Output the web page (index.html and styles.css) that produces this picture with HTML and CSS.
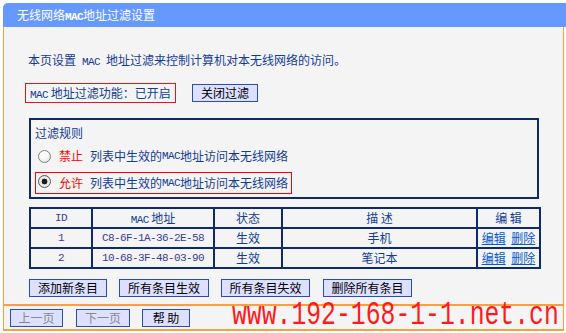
FILE: index.html
```html
<!DOCTYPE html>
<html>
	<head>
		<meta charset="UTF-8">
		<title>无线网络MAC地址过滤设置</title>
		<link rel="stylesheet" href="styles.css">
	</head>
	<body>
		<div id="box">
			<div class="title">无线网络<span class="en b">MAC</span>地址过滤设置</div>
			<div class="main">
				<div class="content">
					<p class="intro">本页设置<span class="en sp">MAC</span>地址过滤来控制计算机对本无线网络的访问。</p>
					<div class="state">
						<span class="stateBox"><span class="en">MAC</span> 地址过滤功能：已开启</span>
						<button class="btn" style="width:66px">关闭过滤</button>
					</div>
					<div class="rule">
						<div class="ruleTitle">过滤规则</div>
						<label class="ruleRow"><input type="radio" name="rule"><span class="red">禁止</span>列表中生效的<span class="en">MAC</span>地址访问本无线网络</label>
						<label class="ruleRow on"><input type="radio" name="rule" checked><span class="red">允许</span>列表中生效的<span class="en">MAC</span>地址访问本无线网络</label>
					</div>
					<table class="list">
						<colgroup>
							<col style="width:62px"><col style="width:122px"><col style="width:68px"><col style="width:195px"><col style="width:63px">
						</colgroup>
						<tr>
							<td class="en">ID</td>
							<td><span class="en">MAC</span> 地址</td>
							<td>状态</td>
							<td>描 述</td>
							<td>编 辑</td>
						</tr>
						<tr>
							<td class="en">1</td>
							<td class="en">C8-6F-1A-36-2E-58</td>
							<td>生效</td>
							<td>手机</td>
							<td><a href="#">编辑</a> <a href="#">删除</a></td>
						</tr>
						<tr>
							<td class="en">2</td>
							<td class="en">10-68-3F-48-03-90</td>
							<td>生效</td>
							<td>笔记本</td>
							<td><a href="#">编辑</a> <a href="#">删除</a></td>
						</tr>
					</table>
					<div class="btns">
						<button class="btn" style="width:78px">添加新条目</button>
						<button class="btn" style="width:90px">所有条目生效</button>
						<button class="btn" style="width:89px">所有条目失效</button>
						<button class="btn" style="width:89px">删除所有条目</button>
					</div>
				</div>
				<div class="foot">
					<button class="btn off" style="width:53px">上一页</button>
					<button class="btn off" style="width:54px">下一页</button>
					<button class="btn" style="width:48px">帮 助</button>
					<div class="wm">www.192-168-1-1.net.cn</div>
				</div>
			</div>
		</div>
	</body>
</html>
```

FILE: styles.css
```css
* {margin: 0; padding: 0;}
body {
	background: #fff;
	font: 12px/16px "Noto Sans CJK SC", sans-serif;
	color: #143c92;
}
.en {
	font-family: "Liberation Mono", monospace;
	font-size: 11px;
	letter-spacing: -0.6px;
	line-height: 10px;
}
.en.b {font-weight: bold;}
.en.sp {margin: 0 6px;}
#box {
	width: 563px;
	margin: 3px 0 0 3px;
}
.title {
	height: 24px;
	line-height: 24px;
	background: #6699ff;
	color: #fff;
	padding-left: 14px;
	border-radius: 5px 0 0 0;
}
.main {
	width: 561px;
	box-sizing: border-box;
	background: #f4f4f4;
	border-left: 1px solid #f7a040;
	border-right: 1px solid #f7a040;
	border-bottom: 2px solid #f7a040;
}
.content {padding: 25px 0 7px 21px;}
.intro {padding-left: 3px; height: 16px;}

/* 状态 */
.state {
	display: flex;
	align-items: flex-start;
	margin-top: 15px;
}
.stateBox {
	width: 151px;
	box-sizing: border-box;
	height: 20px;
	line-height: 18px;
	border: 1px solid #e8141c;
	padding-left: 4px;
	white-space: nowrap;
}
.state .btn {margin: 1px 0 0 16px;}
.btn {
	flex: none;
	height: 18px;
	box-sizing: border-box;
	border: 1px solid #2b4db2;
	background: #dde0ff;
	color: #000;
	font: 12px/16px "Noto Sans CJK SC", sans-serif;
	white-space: nowrap;
}
.btn.off {color: #888;}

/* 过滤规则 */
.rule {
	width: 510px;
	height: 81px;
	box-sizing: border-box;
	margin: 15px 0 0 4px;
	border: 2px solid #0c2a6c;
	padding: 4px 0 0 4px;
}
.ruleTitle {height: 18px; line-height: 18px;}
.ruleRow {
	display: flex;
	align-items: center;
	width: 257px;
	height: 22px;
	box-sizing: border-box;
	border: 1px solid transparent;
	padding-left: 2px;
	margin-top: 3px;
	white-space: nowrap;
}
.ruleRow + .ruleRow {margin-top: 5px;}
.ruleRow.on {border-color: #ff0000;}
.ruleRow input {
	appearance: none;
	-webkit-appearance: none;
	flex: none;
	width: 13px;
	height: 13px;
	border: 1px solid #808080;
	border-radius: 50%;
	background: radial-gradient(circle at 40% 35%, #fff 0, #fafafa 40%, #d6d6d6 100%);
	margin: 0 8px 0 0;
}
.ruleRow.on input {margin-top: -3px;}
.ruleRow input:checked {
	background: radial-gradient(circle, #1a1a1a 0, #1a1a1a 2.6px, #e4e4e4 3.2px, #f4f4f4 100%);
	border-color: #555;
}
.red {color: #ff0000; margin-right: 7px;}

/* 列表 */
.list {
	width: 510px;
	border-collapse: collapse;
	table-layout: fixed;
	margin: 8px 0 0 4px;
}
.list td {
	height: 18px;
	border: 2px solid #0c2a6c;
	padding: 0;
	text-align: center;
	line-height: 16px;
	white-space: nowrap;
}
.list td.en {line-height: 16px; color: #3a3c8e;}
.list a {color: #0a5ac8;}
.list a + a {margin-left: 3px;}

.btns {
	display: flex;
	gap: 12px;
	margin: 10px 0 0 4px;
}
.btns .btn:nth-child(4) {margin-left: 1px;}

/* 底部 */
.foot {
	display: flex;
	align-items: flex-start;
	height: 23px;
	border-top: 2px solid #f7a040;
	padding-left: 6px;
}
.foot .btn {margin: 3px 13px 0 0;}
.foot .btn:nth-child(2) {margin-right: 12px;}
.wm {
	flex: none;
	width: 326px;
	margin: -4px 0 0 29px;
	height: 27px;
	line-height: 27px;
	font-family: "Liberation Mono", monospace;
	font-size: 33px;
	color: #ff1a1a;
	white-space: nowrap;
	transform: scaleX(0.75);
	transform-origin: left center;
}
```
